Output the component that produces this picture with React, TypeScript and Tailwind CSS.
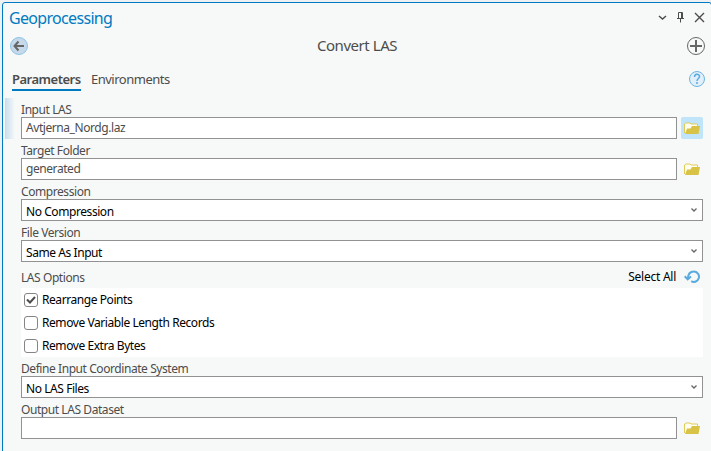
import type { ReactNode } from "react";

function FolderIcon() {
  return (
    <svg width="16" height="12" viewBox="0 0 16 12">
      <path d="M.5 11V2L2 1h4l1 1h6.500v3" fill="#fffef0" stroke="#e0cb5a" />
      <path d="M1 12 3 6.500h3.500L8 4h8l-1.500 8z" fill="#d9c347" />
    </svg>
  );
}

function Browse({ active }: { active?: boolean }) {
  return (
    <button className={`ml-1 flex h-[22px] w-[22px] items-center justify-center rounded-[2px] ${active ? "bg-[#c0e5fa]" : ""}`}>
      <FolderIcon />
    </button>
  );
}

function Label({ children }: { children: ReactNode }) {
  return <div className="h-[19px] whitespace-nowrap leading-[24px]">{children}</div>;
}

function TextField({ label, value, active }: { label: string; value: string; active?: boolean }) {
  return (
    <div className="h-[41px]">
      <Label>{label}</Label>
      <div className="flex">
        <div className="h-[22px] w-[656px] border border-[#929292] bg-white pl-1 leading-[20px]">{value}</div>
        <Browse active={active} />
      </div>
    </div>
  );
}

function SelectField({ label, value }: { label: string; value: string }) {
  return (
    <div className="h-[41px]">
      <Label>{label}</Label>
      <div className="flex h-[22px] w-[682px] items-center justify-between border border-[#929292] bg-white pr-[5px] pl-1 text-black">
        <span className="pt-[3px] leading-[20px]">{value}</span>
        <svg width="6" height="4" viewBox="0 0 6 4">
          <path d="m.5.5 2.500 2.500L5.500.5" fill="none" stroke="#666" strokeWidth="1.300" />
        </svg>
      </div>
    </div>
  );
}

function Option({ label, checked }: { label: string; checked?: boolean }) {
  return (
    <div className="flex h-[23px] items-start pl-[3px]">
      <span className="mt-[5px] h-[14px] w-[14px] rounded-[3px] border border-[#858585] bg-white">
        {checked && (
          <svg width="12" height="12" viewBox="0 0 12 12">
            <path d="m2 5.500 3 3 5-5.500" fill="none" stroke="#4c4c4c" strokeWidth="2" />
          </svg>
        )}
      </span>
      <span className="ml-1 leading-[23px]">{label}</span>
    </div>
  );
}

export default function App() {
  return (
    <div className="h-[451px] w-[711px] overflow-hidden bg-[#eef0f1] pt-[2px] pl-[2px] font-['Noto_Sans',sans-serif] text-[12px] tracking-[-0.43px] text-[#4c4c4c]">
      <div className="h-[460px] w-[710px] rounded-t-[3px] border border-[#007ac2] bg-[#f7f9f8]">
        <header className="flex h-[31px] items-start pr-[3px] pl-[6px]">
          <h1 className="pt-[4px] text-[16px] leading-[22px] tracking-[-0.68px] text-[#007ac2]">Geoprocessing</h1>
          <svg className="mt-[7px] ml-auto" width="52" height="14" viewBox="0 0 52 14" fill="none" stroke="#4c4c4c">
            <path d="m3 6 3.500 3L10 6" strokeWidth="1.500" />
            <path d="M22.500 2.500h4v6h-4zM25.500 2.500v6M21 8.500h7M24.500 8.500v4" />
            <path d="m39 3 9 9m0-9-9 9" strokeWidth="1.400" />
          </svg>
        </header>
        <div className="flex h-[24px] items-center justify-between pr-[5px] pl-[6px]">
          <svg width="20" height="20" viewBox="0 0 20 20">
            <circle cx="10" cy="10" r="8.500" fill="#c5d9ea" stroke="#8cc4e8" />
            <path d="M15 10H6m3.500-4.500L5.500 10l4 4.500" fill="none" stroke="#666" strokeWidth="2" />
          </svg>
          <h2 className="pr-[1px] pb-[2px] text-[15px] leading-[20px] tracking-[-0.45px]">Convert LAS</h2>
          <svg width="20" height="20" viewBox="0 0 20 20" fill="none" stroke="#666">
            <circle cx="10" cy="10" r="8.500" />
            <path d="M10 4v12M4 10h12" strokeWidth="2" />
          </svg>
        </div>
        <nav className="flex h-[45px] items-start gap-[10px] pt-[10px] pr-[5px] pl-[9px] text-[13px] tracking-[-0.5px]">
          <div className="h-[23px] w-[69px] border-b-2 border-[#007ac2] font-semibold leading-[22px]">Parameters</div>
          <div className="leading-[22px]">Environments</div>
          <svg className="ml-auto" width="18" height="22" viewBox="0 0 18 22" fill="none">
            <circle cx="9" cy="11" r="7.500" fill="#e1effa" stroke="#6fb4e0" />
            <path d="M6.500 9c0-3.500 5-3.500 5-.5C11.500 10.500 9 10.500 9 13m0 1v2" stroke="#5aabdf" strokeWidth="1.500" />
          </svg>
        </nav>
        <main className="-mt-[5px] flex">
          <div className="mr-[6px] ml-[2px] h-[41px] w-[10px] bg-linear-to-r from-[#c8dcee] to-[#f7f9f8]" />
          <div className="w-[682px]">
            <TextField label="Input LAS" value="Avtjerna_Nordg.laz" active />
            <TextField label="Target Folder" value="generated" />
            <SelectField label="Compression" value="No Compression" />
            <SelectField label="File Version" value="Same As Input" />
            <div className="flex h-[26px] items-center">
              <span className="pt-[5px]">LAS Options</span>
              <span className="ml-auto pt-[3px] tracking-[-0.25px] text-black">Select All</span>
              <svg className="mt-[3px] mr-[3px] ml-[8px]" width="16" height="14" viewBox="0 0 16 14" fill="none" stroke="#5aabdf" strokeWidth="2">
                <path d="M3.700 9C4 4 6.500 1.500 9.800 1.500a5.200 5.200 0 1 1-2.600 9.700" />
                <path d="M.7 6.300 3.700 9.300 7 6.500" />
              </svg>
            </div>
            <div className="h-[69px] bg-white text-black">
              <Option label="Rearrange Points" checked />
              <Option label="Remove Variable Length Records" />
              <Option label="Remove Extra Bytes" />
            </div>
            <SelectField label="Define Input Coordinate System" value="No LAS Files" />
            <TextField label="Output LAS Dataset" value="" />
          </div>
        </main>
      </div>
    </div>
  );
}
